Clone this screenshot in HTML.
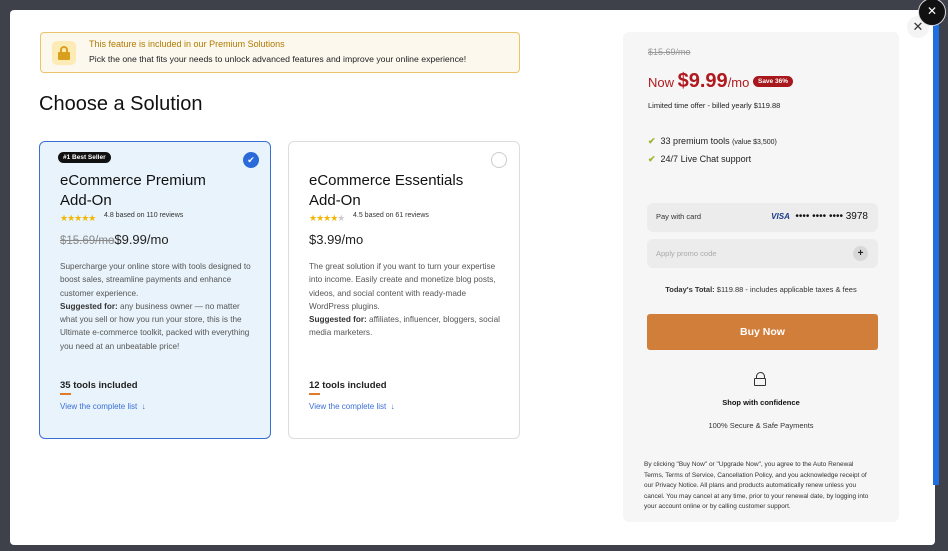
<!DOCTYPE html>
<html><head><style>
*{box-sizing:border-box;margin:0;padding:0}
body{width:948px;height:551px;background:#3e4149;font-family:"Liberation Sans",sans-serif;position:relative;overflow:hidden;color:#222}
.modal{position:absolute;left:10px;top:10px;width:925px;height:535px;background:#fff;border-radius:4px}
.abs{position:absolute}
.banner{left:30px;top:22px;width:480px;height:41px;background:#fcf8ee;border:1px solid #e9c46a;border-radius:4px}
.card{width:232px;height:298px;border-radius:6px;top:131px}
.c1{left:29px;background:#e8f3fb;border:1px solid #3a6fd8}
.c2{left:278px;background:#fff;border:1px solid #ddd}
.card .t{position:absolute;left:20px;top:29px;font-size:15px;line-height:20px;color:#111;width:200px}
.stars{position:absolute;left:20px;top:71px;font-size:9px;color:#f2b705;letter-spacing:-1px}
.rev{position:absolute;left:64px;top:70px;font-size:7px;color:#333}
.pr{position:absolute;left:20px;top:90px;font-size:13px;color:#222}
.desc{position:absolute;left:20px;top:118px;width:192px;font-size:8.2px;line-height:13.3px;color:#555}
.tools{position:absolute;left:20px;top:238px;font-size:9.5px;font-weight:bold;color:#222}
.ul{position:absolute;left:20px;top:251px;width:11px;height:1.5px;background:#e07b2a}
.vl{position:absolute;left:20px;top:260px;font-size:8px;color:#3a6fd8}
.rp{left:613px;top:22px;width:276px;height:490px;background:#f6f6f6;border-radius:6px}
.box{position:absolute;left:24px;width:231px;height:29px;background:#ececec;border-radius:6px;font-size:7.5px}
</style></head><body>
<div class="modal">
 <div class="abs banner">
  <div class="abs" style="left:11px;top:8px;width:24px;height:24px;background:#fdebb5;border-radius:5px">
   <div class="abs" style="left:8px;top:5px;width:8px;height:7px;border:2px solid #d9a020;border-bottom:none;border-radius:4px 4px 0 0"></div>
   <div class="abs" style="left:6px;top:11px;width:12px;height:8px;background:#d9a020;border-radius:1px"></div>
  </div>
  <div class="abs" style="left:48px;top:6px;font-size:9px;color:#b07a00">This feature is included in our Premium Solutions</div>
  <div class="abs" style="left:48px;top:21px;font-size:8.7px;color:#222">Pick the one that fits your needs to unlock advanced features and improve your online experience!</div>
 </div>
 <div class="abs" style="left:29px;top:83px;font-size:20px;color:#111">Choose a Solution</div>

 <div class="abs card c1">
  <div class="abs" style="left:18px;top:10px;background:#111;color:#fff;font-size:6.5px;font-weight:bold;padding:2px 5px;border-radius:7px">#1 Best Seller</div>
  <div class="abs" style="left:203px;top:10px;width:16px;height:16px;border-radius:50%;background:#2a6bd9;color:#fff;font-size:9px;text-align:center;line-height:16px">✔</div>
  <div class="t">eCommerce Premium<br>Add-On</div>
  <div class="stars">★★★★★</div><div class="rev">4.8 based on 110 reviews</div>
  <div class="pr"><span style="text-decoration:line-through;color:#888;font-size:11.5px">$15.69/mo</span>$9.99/mo</div>
  <div class="desc">Supercharge your online store with tools designed to boost sales, streamline payments and enhance customer experience.<br><b style="color:#333">Suggested for:</b> any business owner — no matter what you sell or how you run your store, this is the Ultimate e-commerce toolkit, packed with everything you need at an unbeatable price!</div>
  <div class="tools">35 tools included</div><div class="ul"></div>
  <div class="vl">View the complete list &nbsp;↓</div>
 </div>

 <div class="abs card c2">
  <div class="abs" style="left:202px;top:10px;width:16px;height:16px;border-radius:50%;border:1px solid #ccc"></div>
  <div class="t">eCommerce Essentials<br>Add-On</div>
  <div class="stars">★★★★<span style="color:#ccc">★</span></div><div class="rev">4.5 based on 61 reviews</div>
  <div class="pr">$3.99/mo</div>
  <div class="desc">The great solution if you want to turn your expertise into income. Easily create and monetize blog posts, videos, and social content with ready-made WordPress plugins.<br><b style="color:#333">Suggested for:</b> affiliates, influencer, bloggers, social media marketers.</div>
  <div class="tools">12 tools included</div><div class="ul"></div>
  <div class="vl">View the complete list &nbsp;↓</div>
 </div>

 <div class="abs rp">
  <div class="abs" style="left:25px;top:15px;font-size:9px;color:#999;text-decoration:line-through">$15.69/mo</div>
  <div class="abs" style="left:25px;top:38px;color:#b0191e;font-size:13px;white-space:nowrap">Now <span style="font-size:20px;font-weight:bold">$9.99</span>/mo <span style="background:#a8171c;color:#fff;font-size:6.5px;font-weight:bold;padding:2px 5px;border-radius:6px;vertical-align:4px">Save 36%</span></div>
  <div class="abs" style="left:25px;top:69px;font-size:7.5px;color:#222">Limited time offer - billed yearly $119.88</div>
  <div class="abs" style="left:25px;top:104px;font-size:9px;color:#222"><span style="color:#9db530;font-weight:bold">✔</span>&nbsp; 33 premium tools <span style="font-size:7px">(value $3,500)</span></div>
  <div class="abs" style="left:25px;top:122px;font-size:9px;color:#222"><span style="color:#9db530;font-weight:bold">✔</span>&nbsp; 24/7 Live Chat support</div>
  <div class="box" style="top:171px"><span class="abs" style="left:9px;top:9px;color:#333">Pay with card</span><span class="abs" style="right:10px;top:8px;font-size:10px;color:#111"><b style="color:#1a3a8a;font-style:italic;font-size:8px">VISA</b>&nbsp; •••• •••• •••• 3978</span></div>
  <div class="box" style="top:207px"><span class="abs" style="left:9px;top:10px;color:#aaa">Apply promo code</span><span class="abs" style="right:10px;top:7px;width:15px;height:15px;border-radius:50%;background:#d8d8d8;text-align:center;line-height:15px;font-size:10px;font-weight:bold">+</span></div>
  <div class="abs" style="left:0;width:276px;top:253px;text-align:center;font-size:7.5px;color:#333"><b>Today's Total:</b> $119.88 - includes applicable taxes &amp; fees</div>
  <div class="abs" style="left:24px;top:282px;width:231px;height:36px;background:#d17e3b;border-radius:3px;color:#fff;font-weight:bold;font-size:10.5px;text-align:center;line-height:36px">Buy Now</div>
  <div class="abs" style="left:133px;top:340px;width:9px;height:7px;border:1.5px solid #333;border-bottom:none;border-radius:5px 5px 0 0"></div>
  <div class="abs" style="left:131px;top:346px;width:12px;height:8px;border:1.5px solid #333;border-radius:1px"></div>
  <div class="abs" style="left:0;width:276px;top:366px;text-align:center;font-size:7.5px;font-weight:bold;color:#111">Shop with confidence</div>
  <div class="abs" style="left:0;width:276px;top:389px;text-align:center;font-size:7.5px;color:#333">100% Secure &amp; Safe Payments</div>
  <div class="abs" style="left:21px;top:428px;width:230px;font-size:6.5px;line-height:10.5px;color:#333">By clicking "Buy Now" or "Upgrade Now", you agree to the Auto Renewal Terms, Terms of Service, Cancellation Policy, and you acknowledge receipt of our Privacy Notice. All plans and products automatically renew unless you cancel. You may cancel at any time, prior to your renewal date, by logging into your account online or by calling customer support.</div>
 </div>
 <div class="abs" style="left:897px;top:6px;width:22px;height:22px;border-radius:50%;background:#f4f4f4;text-align:center;line-height:22px;font-size:13px;color:#333">✕</div>
</div>
<div class="abs" style="left:933px;top:10px;width:6px;height:475px;background:#1f6fe0"></div>
<div class="abs" style="left:918px;top:-2px;width:28px;height:28px;border-radius:50%;background:#111;border:1.5px solid #ddd;color:#fff;text-align:center;line-height:25px;font-size:12px">✕</div>
</body></html>
